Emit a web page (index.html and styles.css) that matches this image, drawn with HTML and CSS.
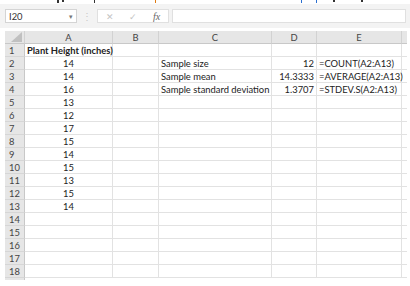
FILE: index.html
```html
<!DOCTYPE html>
<html lang="en">
<head>
    <meta charset="UTF-8">
    <title>Plant Height</title>
    <link rel="stylesheet" href="styles.css">
</head>
<body>

    <div class="clip">
        <span class="mark m1"></span><span class="mark m2"></span><span class="mark m3"></span><span class="mark m4 orange"></span><span class="mark m5 blue"></span><span class="mark m6 blue"></span><span class="mark m7"></span><span class="mark m8"></span>
    </div>

    <div class="toolbar">
        <div class="namebox">I20<span class="arrow">&#9662;</span></div>
        <div class="dots">&#8942;</div>
        <div class="buttons">
            <span class="btn">&#10005;</span>
            <span class="btn">&#10003;</span>
            <span class="btn fx">fx</span>
        </div>
        <div class="formula"></div>
    </div>

    <div class="sheet">
        <div class="corner"><span class="tri"></span></div>
        <div class="colhead">A</div>
        <div class="colhead">B</div>
        <div class="colhead">C</div>
        <div class="colhead">D</div>
        <div class="colhead">E</div>
        <div class="colhead edge"></div>

        <div class="rowhead">1</div><div class="cell bold">Plant Height (inches)</div><div class="cell"></div><div class="cell"></div><div class="cell"></div><div class="cell"></div><div class="cell edge"></div>
        <div class="rowhead">2</div><div class="cell mid">14</div><div class="cell"></div><div class="cell">Sample size</div><div class="cell num">12</div><div class="cell">=COUNT(A2:A13)</div><div class="cell edge"></div>
        <div class="rowhead">3</div><div class="cell mid">14</div><div class="cell"></div><div class="cell">Sample mean</div><div class="cell num">14.3333</div><div class="cell">=AVERAGE(A2:A13)</div><div class="cell edge"></div>
        <div class="rowhead">4</div><div class="cell mid">16</div><div class="cell"></div><div class="cell">Sample standard deviation</div><div class="cell num">1.3707</div><div class="cell">=STDEV.S(A2:A13)</div><div class="cell edge"></div>
        <div class="rowhead">5</div><div class="cell mid">13</div><div class="cell"></div><div class="cell"></div><div class="cell"></div><div class="cell"></div><div class="cell edge"></div>
        <div class="rowhead">6</div><div class="cell mid">12</div><div class="cell"></div><div class="cell"></div><div class="cell"></div><div class="cell"></div><div class="cell edge"></div>
        <div class="rowhead">7</div><div class="cell mid">17</div><div class="cell"></div><div class="cell"></div><div class="cell"></div><div class="cell"></div><div class="cell edge"></div>
        <div class="rowhead">8</div><div class="cell mid">15</div><div class="cell"></div><div class="cell"></div><div class="cell"></div><div class="cell"></div><div class="cell edge"></div>
        <div class="rowhead">9</div><div class="cell mid">14</div><div class="cell"></div><div class="cell"></div><div class="cell"></div><div class="cell"></div><div class="cell edge"></div>
        <div class="rowhead">10</div><div class="cell mid">15</div><div class="cell"></div><div class="cell"></div><div class="cell"></div><div class="cell"></div><div class="cell edge"></div>
        <div class="rowhead">11</div><div class="cell mid">13</div><div class="cell"></div><div class="cell"></div><div class="cell"></div><div class="cell"></div><div class="cell edge"></div>
        <div class="rowhead">12</div><div class="cell mid">15</div><div class="cell"></div><div class="cell"></div><div class="cell"></div><div class="cell"></div><div class="cell edge"></div>
        <div class="rowhead">13</div><div class="cell mid">14</div><div class="cell"></div><div class="cell"></div><div class="cell"></div><div class="cell"></div><div class="cell edge"></div>
        <div class="rowhead">14</div><div class="cell"></div><div class="cell"></div><div class="cell"></div><div class="cell"></div><div class="cell"></div><div class="cell edge"></div>
        <div class="rowhead">15</div><div class="cell"></div><div class="cell"></div><div class="cell"></div><div class="cell"></div><div class="cell"></div><div class="cell edge"></div>
        <div class="rowhead">16</div><div class="cell"></div><div class="cell"></div><div class="cell"></div><div class="cell"></div><div class="cell"></div><div class="cell edge"></div>
        <div class="rowhead">17</div><div class="cell"></div><div class="cell"></div><div class="cell"></div><div class="cell"></div><div class="cell"></div><div class="cell edge"></div>
        <div class="rowhead">18</div><div class="cell"></div><div class="cell"></div><div class="cell"></div><div class="cell"></div><div class="cell"></div><div class="cell edge"></div>
        <div class="rowhead stub"></div>
    </div>

</body>
</html>
```

FILE: styles.css
```css
body {
    margin: 0;
    padding: 0;
    background-color: white;
    font-family: "Lato", "Liberation Sans", sans-serif;
    font-size: 9.4px;
    color: #222;
}
.clip {
    height: 4px;
    display: flex;
    align-items: flex-start;
}
.mark {
    display: block;
    width: 1px;
    height: 3px;
    background-color: #333;
}
.m1 { margin-left: 57px; width: 2px; }
.m2 { margin-left: 3px; height: 2px; width: 2px; }
.m3 { margin-left: 30px; }
.m4 { margin-left: 60px; }
.m5 { margin-left: 145px; }
.m6 { margin-left: 14px; }
.m7 { margin-left: 16px; width: 2px; height: 2px; }
.m8 { margin-left: 26px; width: 2px; height: 2px; }
.orange { background-color: #e07a10; }
.blue { background-color: #2a6fd0; }

.toolbar {
    background-color: #f3f3f3;
    height: 24px;
    display: flex;
    align-items: center;
    padding-left: 5px;
    margin-bottom: 3px;
}
.namebox {
    width: 72px;
    height: 14px;
    background-color: white;
    border: 1px solid #d4d4d4;
    box-sizing: border-box;
    display: flex;
    justify-content: space-between;
    align-items: center;
    padding-left: 3px;
    color: #333;
}
.arrow {
    font-size: 7px;
    color: #777;
    margin-right: 3px;
}
.dots {
    width: 20px;
    text-align: center;
    color: #c8c8c8;
    font-size: 10px;
}
.buttons {
    width: 72px;
    height: 14px;
    background-color: white;
    border: 1px solid #e0e0e0;
    box-sizing: border-box;
    display: flex;
    align-items: center;
    justify-content: space-around;
    color: #c4c4c4;
    font-size: 9px;
}
.buttons .fx {
    font-family: "Liberation Serif", serif;
    font-style: italic;
    color: #666;
    font-size: 10px;
}
.formula {
    flex: 1;
    height: 14px;
    margin-left: 3px;
    margin-right: 4px;
    background-color: white;
    border: 1px solid #e0e0e0;
    box-sizing: border-box;
}

.sheet {
    display: grid;
    grid-template-columns: 20px 88px 46px 113px 45px 85px 5px;
    grid-auto-rows: 13px;
    margin-left: 5px;
}
.corner {
    background-color: #e6e6e6;
    border-right: 1px solid #d2d2d2;
    border-bottom: 1px solid #c8c8c8;
    position: relative;
}
.tri {
    position: absolute;
    right: 2px;
    bottom: 1px;
    width: 0;
    height: 0;
    border-left: 11px solid transparent;
    border-bottom: 10px solid #c0c0c0;
}
.colhead {
    background-color: #e6e6e6;
    border-right: 1px solid #d2d2d2;
    border-bottom: 1px solid #c8c8c8;
    text-align: center;
    line-height: 13px;
    color: #444;
}
.rowhead {
    background-color: #e6e6e6;
    border-right: 1px solid #c8c8c8;
    border-bottom: 1px solid #d6d6d6;
    padding-left: 4px;
    line-height: 13px;
    color: #444;
}
.rowhead.stub {
    height: 2px;
    border-bottom: none;
}
.cell {
    border-right: 1px solid #e2e2e2;
    border-bottom: 1px solid #e2e2e2;
    line-height: 13px;
    padding: 0 2px;
    white-space: nowrap;
}
.cell.edge, .colhead.edge {
    padding: 0;
    border-right: none;
}
.bold {
    font-weight: bold;
}
.mid {
    text-align: center;
}
.num {
    text-align: right;
}
```
